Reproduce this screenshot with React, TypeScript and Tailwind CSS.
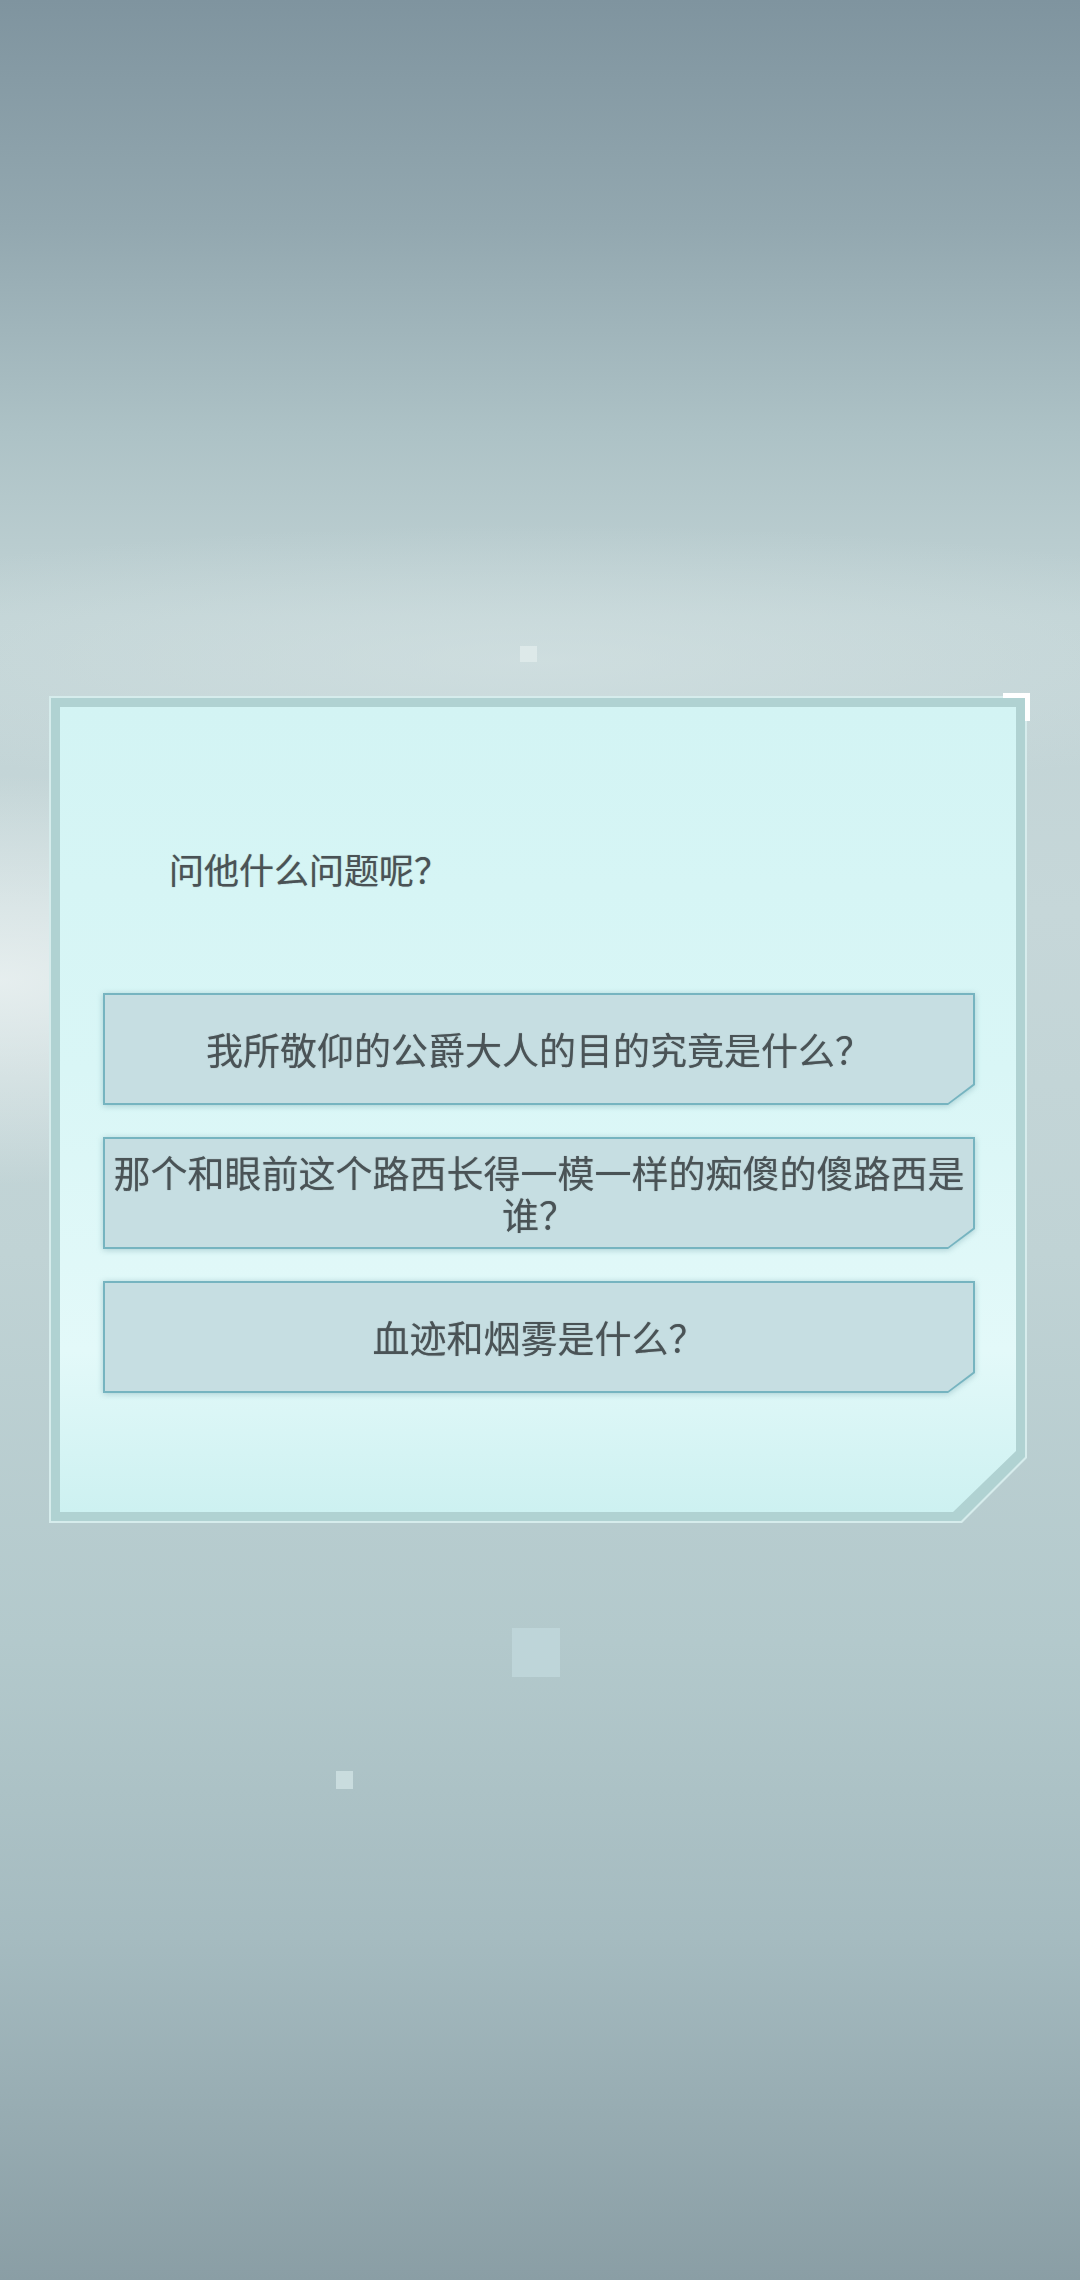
const questions = [
  '我所敬仰的公爵大人的目的究竟是什么？',
  '那个和眼前这个路西长得一模一样的痴傻的傻路西是谁？',
  '血迹和烟雾是什么？',
]

function ChoiceButton({ label }: { label: string }) {
  return (
    <div className="drop-shadow-[0_1px_3px_rgba(70,130,140,0.35)]">
      <div className="h-[112px] bg-[#76b4c0] p-[2px] [clip-path:polygon(0_0,100%_0,100%_calc(100%_-_20px),calc(100%_-_27px)_100%,0_100%)]">
        <div className="flex h-full w-full items-center justify-center bg-[#c6dee2] text-center text-[37px] leading-[42px] text-[#4a5356] [text-shadow:0_0_1px_rgba(60,70,72,0.5)] [clip-path:polygon(0_0,100%_0,100%_calc(100%_-_19px),calc(100%_-_25px)_100%,0_100%)]">
          {label}
        </div>
      </div>
    </div>
  )
}

export default function App() {
  return (
    <div className="relative min-h-[2280px] w-full overflow-hidden bg-[radial-gradient(45%_9%_at_0%_43%,rgba(238,244,244,0.8),rgba(238,244,244,0)),radial-gradient(80%_6%_at_50%_29%,rgba(214,228,229,0.6),rgba(214,228,229,0)),linear-gradient(180deg,#7f949f_0%,#93a8b0_10%,#adc2c6_19%,#c1d3d5_27%,#c6d7d9_40%,#c0d3d5_55%,#b3c9cc_72%,#a5bbc0_85%,#8a9ea5_100%)] font-['Noto_Sans_CJK_SC','Noto_Sans',sans-serif]">
      {/* floating squares */}
      <div className="absolute left-[520px] top-[646px] h-[16px] w-[17px] bg-[#dde9e9]" />
      <div className="absolute left-[512px] top-[1628px] h-[49px] w-[48px] bg-[#bed5d9]" />
      <div className="absolute left-[336px] top-[1771px] h-[18px] w-[17px] bg-[#c9dcde]" />

      <div className="relative ml-[49px] mt-[696px] h-[827px] w-[978px]">
        <div className="h-full w-full bg-[#d6ecec] p-[2px] [clip-path:polygon(0_0,100%_0,100%_calc(100%_-_65px),calc(100%_-_65px)_100%,0_100%)]">
          <div className="h-full w-full bg-[#b0d2d2] p-[9px] [clip-path:polygon(0_0,100%_0,100%_calc(100%_-_64px),calc(100%_-_64px)_100%,0_100%)]">
            <div className="flex h-full w-full flex-col bg-[linear-gradient(180deg,#d3f4f4_0%,#d9f6f6_45%,#e3f9f9_80%,#d8f5f5_90%,#cdf1f1_100%)] [clip-path:polygon(0_0,100%_0,100%_calc(100%_-_61px),calc(100%_-_63px)_100%,0_100%)]">
              <p className="pl-[109px] pt-[141px] text-[35px] leading-[42px] text-[#4a5255] [text-shadow:0_0_1px_rgba(60,70,72,0.5)]">
                问他什么问题呢？
              </p>
              <div className="ml-[43px] mt-[103px] flex w-[872px] flex-col gap-[32px]">
                {questions.map((q) => (
                  <ChoiceButton key={q} label={q} />
                ))}
              </div>
            </div>
          </div>
        </div>
        {/* corner bracket */}
        <div className="absolute right-[-3px] top-[-3px] h-[28px] w-[27px] border-r-[5px] border-t-[5px] border-white" />
      </div>
    </div>
  )
}
